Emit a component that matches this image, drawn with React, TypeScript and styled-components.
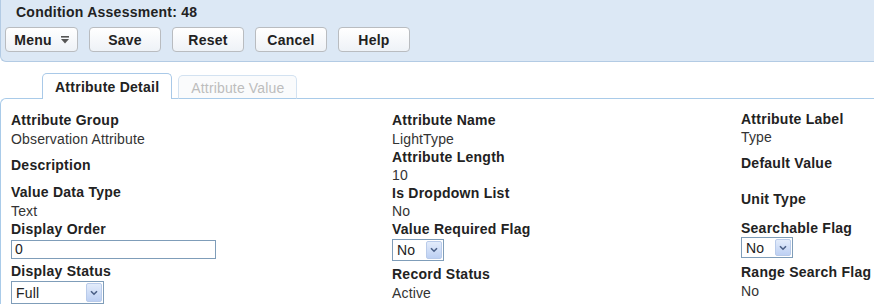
import React from "react";
import styled, { createGlobalStyle } from "styled-components";

const Global = createGlobalStyle`
  html, body { margin: 0; padding: 0; background: #ffffff; }
  body { font-family: "Liberation Sans", Arial, sans-serif; font-size: 14px; color: #222; }
`;

const Page = styled.div`
  width: 874px;
  height: 307px;
  overflow: hidden;
`;

const Header = styled.div`
  background: #dce8f5;
  border-left: 1px solid #b3cbe4;
  border-bottom: 1px solid #b3cbe4;
  border-bottom-left-radius: 6px;
  padding: 3px 0 9px 4px;
`;

const Title = styled.div`
  font-weight: bold;
  font-size: 14px;
  line-height: 18px;
  letter-spacing: 0.25px;
  color: #222;
  margin-left: 11px;
`;

const Toolbar = styled.div`
  display: flex;
  gap: 11px;
  margin-top: 6px;
`;

const Button = styled.div<{ $w?: number }>`
  box-sizing: border-box;
  width: ${(p) => p.$w ?? 72}px;
  height: 25px;
  border: 1px solid #b9bcc0;
  border-radius: 4px;
  background: linear-gradient(#ffffff, #eef2f7);
  display: flex;
  align-items: center;
  justify-content: center;
  gap: 9px;
  font-weight: bold;
  font-size: 14px;
  letter-spacing: 0.25px;
  color: #222;
`;

const TabBar = styled.div`
  display: flex;
  align-items: flex-end;
  gap: 6px;
  padding: 11px 0 0 42px;
  margin-bottom: -1px;
  position: relative;
  z-index: 1;
`;

const Tab = styled.div<{ $active?: boolean }>`
  box-sizing: border-box;
  height: ${(p) => (p.$active ? 26 : 24)}px;
  padding: ${(p) => (p.$active ? 4 : 3)}px 12px 0;
  border: 1px solid ${(p) => (p.$active ? "#a9c9e8" : "#d3e2f1")};
  border-bottom: ${(p) => (p.$active ? "none" : "1px solid #a9cbe9")};
  border-radius: 5px 5px 0 0;
  background: ${(p) => (p.$active ? "#ffffff" : "#fafbfc")};
  color: ${(p) => (p.$active ? "#222" : "#bdbdbd")};
  font-weight: ${(p) => (p.$active ? "bold" : "normal")};
  letter-spacing: ${(p) => (p.$active ? 0.25 : 0.15)}px;
  font-size: 14px;
  line-height: 18px;
`;

const Content = styled.div`
  border-top: 1px solid #a9cbe9;
  border-left: 1px solid #a9cbe9;
  border-top-left-radius: 6px;
  display: grid;
  grid-template-columns: 381px 349px 1fr;
  padding-left: 10px;
`;

const Column = styled.div<{ $top: number }>`
  display: flex;
  flex-direction: column;
  align-items: flex-start;
  padding-top: ${(p) => p.$top}px;
`;

const Label = styled.div<{ $mt?: number }>`
  font-weight: bold;
  font-size: 14px;
  line-height: 18px;
  letter-spacing: 0.25px;
  color: #222;
  margin-top: ${(p) => p.$mt ?? 0}px;
  white-space: nowrap;
`;

const Value = styled.div<{ $mt?: number }>`
  font-size: 14px;
  line-height: 18px;
  letter-spacing: 0.15px;
  color: #333;
  margin-top: ${(p) => p.$mt ?? 0}px;
  white-space: nowrap;
`;

const TextInput = styled.div<{ $mt?: number }>`
  box-sizing: border-box;
  width: 205px;
  height: 19px;
  border: 1px solid #7f9db9;
  margin-top: ${(p) => p.$mt ?? 0}px;
  padding-left: 3px;
  font-size: 14px;
  line-height: 17px;
  color: #222;
`;

const Select = styled.div<{ $mt?: number; $w: number; $h: number }>`
  box-sizing: border-box;
  width: ${(p) => p.$w}px;
  height: ${(p) => p.$h}px;
  border: 1px solid #7f9db9;
  margin-top: ${(p) => p.$mt ?? 0}px;
  padding: 1px 1px 1px 4px;
  display: flex;
  align-items: stretch;
  justify-content: space-between;
  font-size: 14px;
  letter-spacing: 0.15px;
  color: #222;
`;

const SelectText = styled.span`
  display: flex;
  align-items: center;
`;

const ArrowBox = styled.span`
  box-sizing: border-box;
  width: 16px;
  border: 1px solid #b9cbea;
  border-radius: 2px;
  background: linear-gradient(#e3ecfb, #bdd0f3);
  display: flex;
  align-items: center;
  justify-content: center;
`;

const MenuIcon = () => (
  <svg width="8" height="8" viewBox="0 0 8 8">
    <rect x="0" y="0" width="8" height="1.6" fill="#555" />
    <path d="M0 3 H8 L4 7.5 Z" fill="#555" />
  </svg>
);

const Chevron = () => (
  <svg width="8" height="6" viewBox="0 0 8 6">
    <path d="M1 1.2 L4 4.2 L7 1.2" fill="none" stroke="#4a5f86" strokeWidth="1.6" />
  </svg>
);

const Dropdown = ({ text, w, h, mt }: { text: string; w: number; h: number; mt?: number }) => (
  <Select $w={w} $h={h} $mt={mt}>
    <SelectText>{text}</SelectText>
    <ArrowBox>
      <Chevron />
    </ArrowBox>
  </Select>
);

export default function App() {
  return (
    <Page>
      <Global />
      <Header>
        <Title>Condition Assessment: 48</Title>
        <Toolbar>
          <Button $w={73}>
            Menu <MenuIcon />
          </Button>
          <Button>Save</Button>
          <Button>Reset</Button>
          <Button>Cancel</Button>
          <Button>Help</Button>
        </Toolbar>
      </Header>
      <TabBar>
        <Tab $active>Attribute Detail</Tab>
        <Tab>Attribute Value</Tab>
      </TabBar>
      <Content>
        <Column $top={12}>
          <Label>Attribute Group</Label>
          <Value $mt={1}>Observation Attribute</Value>
          <Label $mt={8}>Description</Label>
          <Label $mt={9}>Value Data Type</Label>
          <Value $mt={1}>Text</Value>
          <Label>Display Order</Label>
          <TextInput $mt={2}>0</TextInput>
          <Label $mt={3}>Display Status</Label>
          <Dropdown text="Full" w={93} h={23} mt={1} />
        </Column>
        <Column $top={12}>
          <Label>Attribute Name</Label>
          <Value $mt={1}>LightType</Value>
          <Label>Attribute Length</Label>
          <Value>10</Value>
          <Label>Is Dropdown List</Label>
          <Value>No</Value>
          <Label>Value Required Flag</Label>
          <Dropdown text="No" w={52} h={22} mt={1} />
          <Label $mt={4}>Record Status</Label>
          <Value $mt={1}>Active</Value>
        </Column>
        <Column $top={11}>
          <Label>Attribute Label</Label>
          <Value>Type</Value>
          <Label $mt={8}>Default Value</Label>
          <Label $mt={18}>Unit Type</Label>
          <Label $mt={11}>Searchable Flag</Label>
          <Dropdown text="No" w={52} h={21} />
          <Label $mt={5}>Range Search Flag</Label>
          <Value $mt={1}>No</Value>
        </Column>
      </Content>
    </Page>
  );
}
